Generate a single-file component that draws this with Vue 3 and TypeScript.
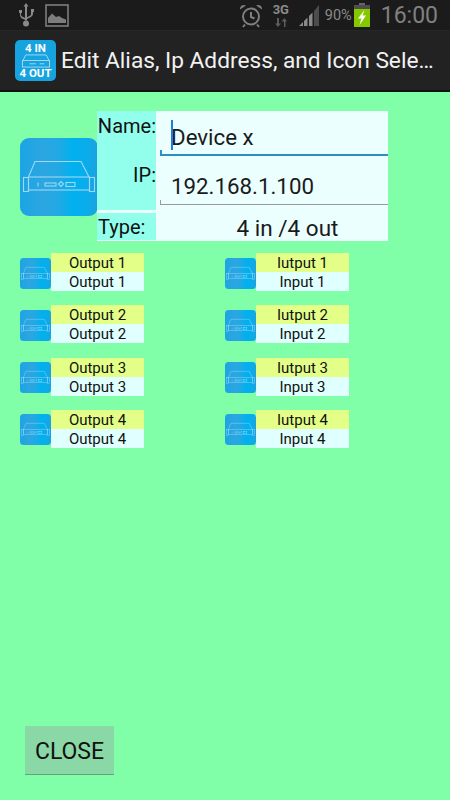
<script setup lang="ts">
const rows = [1, 2, 3, 4]
</script>

<template>
  <div class="screen">
    <svg class="defs" width="0" height="0">
      <defs>
        <linearGradient id="blue" x1="0" y1="0" x2="1" y2="0">
          <stop offset="0" stop-color="#1aa5e4" />
          <stop offset="0.3" stop-color="#2ca6e1" />
          <stop offset="0.5" stop-color="#20a9e4" />
          <stop offset="0.68" stop-color="#00b1ef" />
          <stop offset="0.85" stop-color="#0aaceb" />
          <stop offset="1" stop-color="#1ca2df" />
        </linearGradient>
        <symbol id="device" viewBox="0 0 78 78">
          <rect width="78" height="78" rx="9" fill="url(#blue)" />
          <g fill="none" stroke="#9fd8f3" stroke-width="1.100">
            <path d="M8.500 39 L15 23.500 H61 L69 39" />
            <rect x="8.500" y="39" width="61" height="13" />
            <rect x="3.500" y="39.500" width="5" height="14" />
            <rect x="69.500" y="39.500" width="5" height="14" />
            <rect x="25" y="45" width="11" height="3" />
            <path d="M41 43.500 l2.500 2.500 -2.500 2.500 -2.500-2.500z" />
            <rect x="46" y="44.500" width="9" height="4" />
            <path d="M18 44.500v4" />
          </g>
        </symbol>
      </defs>
    </svg>

    <header class="status-bar">
      <div class="status-left">
        <svg class="usb" width="17" height="24" viewBox="0 0 17 24">
          <g fill="#8a8a8a">
            <path d="M8 0 l2.500 3.500 h-1.500 v14 h-2 v-14 h-1.500z" />
            <path d="M1 7h3v3h-1v1.500c0 1.500 1 2 2 2.500l2 1v1.800l-3-1.300C2.500 14.500 2 13 2 11.500V10H1z" />
            <path d="M13 6h3v3h-1v1.500c0 2-1 3-2.500 3.700L9 16v-1.800l2.500-1.200c1-.5 1.500-1 1.500-2.500V9z" />
            <circle cx="8" cy="20.500" r="3" />
          </g>
        </svg>
        <svg class="picture" width="24" height="23" viewBox="0 0 24 23">
          <rect x="1" y="1" width="22" height="21" fill="none" stroke="#7d7d7d" stroke-width="1.600" />
          <path d="M3 19 V14 L7 9.500 11 13 14 12 17 14 21 15.500 V19z" fill="#7d7d7d" />
        </svg>
      </div>
      <div class="status-right">
        <svg class="alarm" width="24" height="25" viewBox="0 0 24 25">
          <g fill="none" stroke="#7f7f7f" stroke-width="2">
            <circle cx="12" cy="13.500" r="8" />
            <path d="M12 9v5l3.500 1.500" />
            <path d="M6 21.500l-2 2.500M18 21.500l2 2.500" />
          </g>
          <path d="M1 6.500 A4 4 0 0 1 7 2.500z M23 6.500 A4 4 0 0 0 17 2.500z" fill="#7f7f7f" />
        </svg>
        <div class="net">
          <span class="net-label">3G</span>
          <svg width="14" height="9" viewBox="0 0 14 9">
            <path d="M4 9V3.500H1.500L4.500 0 7 3.500H5.500V9z" fill="#5c5c5c" transform="translate(6 0)" />
            <path d="M3 0v5.500H1L4 9l3-3.500H5V0z" fill="#5c5c5c" />
          </svg>
        </div>
        <svg class="signal" width="21" height="21" viewBox="0 0 21 21">
          <path d="M0 21 L4 17 V21z" fill="#8a8a8a" />
          <path d="M5 16 L8.500 12.500 V21 H5z" fill="#8a8a8a" />
          <path d="M10 11 L13.500 7.500 V21 H10z" fill="#8a8a8a" />
          <path d="M15 6 L20 0 V21 H15z" fill="#4c4c4c" />
        </svg>
        <span class="percent">90%</span>
        <svg class="battery" width="16" height="24" viewBox="0 0 16 24">
          <rect x="5" y="0" width="6" height="2" fill="#666" />
          <rect x="0" y="2" width="16" height="4" fill="#4e4e4e" />
          <rect x="0" y="6" width="16" height="18" fill="#86c800" />
          <path d="M10.500 7 L4 15.500 H7.500 L5.500 22 L12 12.500 H8.500z" fill="#fff" />
        </svg>
        <span class="clock">16:00</span>
      </div>
    </header>

    <div class="action-bar">
      <div class="app-icon">
        <span>4 IN</span>
        <svg width="34" height="15" viewBox="0 0 34 15">
          <g fill="none" stroke="#a9dcf3" stroke-width="1">
            <path d="M3 7 L6 1 H28 L31 7" />
            <rect x="2.500" y="7" width="29" height="7" />
            <path d="M10 10.500h7M21 10.500h5" />
          </g>
        </svg>
        <span>4 OUT</span>
      </div>
      <h1 class="title">Edit Alias, Ip Address, and Icon Sele…</h1>
    </div>

    <main class="content">
      <section class="device">
        <svg class="device-icon"><use href="#device" /></svg>
        <div class="form">
          <div class="labels">
            <div class="label-main">
              <label class="label-name">Name:</label>
              <label class="label-ip">IP:</label>
            </div>
            <label class="label-type">Type:</label>
          </div>
          <div class="fields">
            <div class="field field-active">
              <span class="cursor"></span>
              <span>Device x</span>
            </div>
            <div class="field">
              <span>192.168.1.100</span>
            </div>
            <div class="type-value">4 in /4 out</div>
          </div>
        </div>
      </section>

      <section class="ports">
        <template v-for="n in rows" :key="n">
          <div class="port">
            <svg class="port-icon"><use href="#device" /></svg>
            <div class="port-text">
              <div class="alias">Output {{ n }}</div>
              <div class="name">Output {{ n }}</div>
            </div>
          </div>
          <div class="port">
            <svg class="port-icon"><use href="#device" /></svg>
            <div class="port-text">
              <div class="alias">Iutput {{ n }}</div>
              <div class="name">Input {{ n }}</div>
            </div>
          </div>
        </template>
      </section>

      <button class="close-btn" type="button">CLOSE</button>
    </main>
  </div>
</template>

<style scoped>
.screen {
  width: 450px;
  height: 800px;
  display: flex;
  flex-direction: column;
  background: #80ffa8;
  font-family: Roboto, "Liberation Sans", sans-serif;
  color: #111;
  overflow: hidden;
}

.defs {
  position: absolute;
}

.status-bar {
  height: 31px;
  flex: none;
  display: flex;
  align-items: center;
  justify-content: space-between;
  background: #1b1b1b;
  box-sizing: border-box;
  padding: 0 12px 0 18px;
  border-bottom: 1px solid #262626;
}

.status-left {
  display: flex;
  align-items: center;
  gap: 10px;
}

.status-right {
  display: flex;
  align-items: center;
}

.alarm {
  margin-right: 9px;
}

.net {
  width: 18px;
  display: flex;
  flex-direction: column;
  align-items: center;
  gap: 2px;
  margin-right: 9px;
}

.net-label {
  font-size: 13px;
  line-height: 12px;
  font-weight: 700;
  color: #8a8a8a;
}

.signal {
  margin-right: 5px;
}

.percent {
  font-size: 14.500px;
  color: #8a8a8a;
  margin-right: 2px;
}

.battery {
  margin-right: 11px;
}

.clock {
  font-size: 23px;
  color: #808080;
}

.action-bar {
  height: 61px;
  flex: none;
  display: flex;
  align-items: center;
  box-sizing: border-box;
  padding: 0 10px 0 15px;
  gap: 5px;
  background: #222;
  border-bottom: 2px solid #111;
}

.app-icon {
  width: 41px;
  height: 41px;
  flex: none;
  border-radius: 5px;
  background: #16a3e0;
  display: flex;
  flex-direction: column;
  align-items: center;
  justify-content: space-between;
  box-sizing: border-box;
  padding: 3px 0 2px;
  color: #fff;
  font-size: 11.500px;
  line-height: 11px;
  font-weight: 700;
}

.title {
  margin: 0;
  min-width: 0;
  flex: 1;
  font-size: 22.700px;
  font-weight: 400;
  color: #f2f2f2;
  white-space: nowrap;
}

.content {
  flex: 1;
  display: flex;
  flex-direction: column;
  padding: 19px 0 25px 20px;
}

.device {
  display: flex;
  align-items: flex-start;
}

.device-icon {
  width: 78px;
  height: 78px;
  flex: none;
  margin-top: 27px;
  margin-right: -1px;
}

.form {
  display: flex;
  width: 291px;
  height: 130px;
  background: #ebffff;
}

.labels {
  width: 59px;
  flex: none;
  display: flex;
  flex-direction: column;
  font-size: 20px;
}

.label-main {
  height: 99px;
  background: #92ffec;
  margin-bottom: 3px;
  text-align: right;
}

.label-name {
  display: block;
  padding-top: 4px;
  line-height: 22px;
}

.label-ip {
  display: block;
  padding-top: 27px;
  line-height: 22px;
}

.label-type {
  height: 27px;
  background: #92ffec;
  line-height: 28px;
  padding-left: 1px;
}

.fields {
  flex: 1;
  display: flex;
  flex-direction: column;
  font-size: 22.300px;
  color: #1a1a1a;
}

.field {
  height: 45px;
  margin: 0 0 0 4px;
  padding: 8px 0 0 11px;
  box-sizing: border-box;
  display: flex;
  align-items: center;
  border-bottom: 1px solid #9a9a9a;
  position: relative;
}

.field::after {
  content: "";
  position: absolute;
  left: 0;
  bottom: 0;
  width: 1px;
  height: 4px;
  background: #9a9a9a;
}

.field + .field {
  height: 49px;
  padding-top: 12px;
}

.field-active {
  border-bottom: 2px solid #2a8fc4;
}

.field-active::after {
  width: 2px;
  background: #2a8fc4;
}

.cursor {
  position: absolute;
  left: 11px;
  top: 9px;
  width: 2px;
  height: 30px;
  background: #1c7fe0;
}

.type-value {
  flex: 1;
  text-align: center;
  padding: 5px 0 0 31px;
  line-height: 36px;
  height: 36px;
  box-sizing: border-box;
  font-size: 22.500px;
}

.ports {
  display: grid;
  grid-template-columns: 205px 205px;
  row-gap: 14.330px;
  margin-top: 12px;
}

.port {
  display: flex;
  align-items: center;
}

.port-icon {
  width: 31px;
  height: 31px;
  flex: none;
  margin-top: 2px;
}

.port-text {
  width: 93px;
  font-size: 15px;
  text-align: center;
}

.alias {
  height: 19px;
  line-height: 21px;
  background: #e3ff88;
}

.name {
  height: 19px;
  line-height: 21px;
  background: #e0ffff;
}

.close-btn {
  margin-top: auto;
  margin-left: 5px;
  width: 89px;
  height: 49px;
  border: none;
  border-bottom: 1px solid #5fa67a;
  background: #8ad8a6;
  color: #111;
  font-family: inherit;
  font-size: 23px;
  padding: 2px 0 0;
}
</style>
